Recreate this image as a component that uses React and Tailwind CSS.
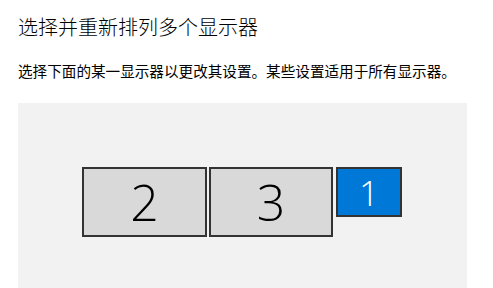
import React from 'react'

const cjk = { fontFamily: '"Noto Sans CJK SC", "Noto Sans", sans-serif' }

function Monitor({ n, active, className }) {
  return (
    <div
      className={
        'flex items-center justify-center border-2 border-[#333333] font-light ' +
        (active ? 'bg-[#0078d7] text-white ' : 'bg-[#d9d9d9] text-black ') +
        className
      }
      style={{ fontFamily: '"Open Sans", "Liberation Sans", sans-serif' }}
    >
      {n}
    </div>
  )
}

export default function App() {
  return (
    <div className="w-[493px] h-[288px] bg-white pl-[18px] pt-[12px] overflow-hidden text-black" style={cjk}>
      <h1 className="text-[20px] leading-[30px] font-light">选择并重新排列多个显示器</h1>
      <p className="mt-[19px] text-[14.6px] leading-[20px]">选择下面的某一显示器以更改其设置。某些设置适用于所有显示器。</p>
      <div className="mt-[22px] w-[449px] h-[185px] bg-[#f2f2f2] pl-[64px] pt-[64px]">
        <div className="flex items-start">
          <Monitor n="2" className="w-[125px] h-[70px] text-[50px] leading-none" />
          <Monitor n="3" className="ml-[2px] w-[124px] h-[70px] text-[50px] leading-none" />
          <Monitor n="1" active className="ml-[3px] w-[66px] h-[50px] text-[35px] leading-none" />
        </div>
      </div>
    </div>
  )
}
